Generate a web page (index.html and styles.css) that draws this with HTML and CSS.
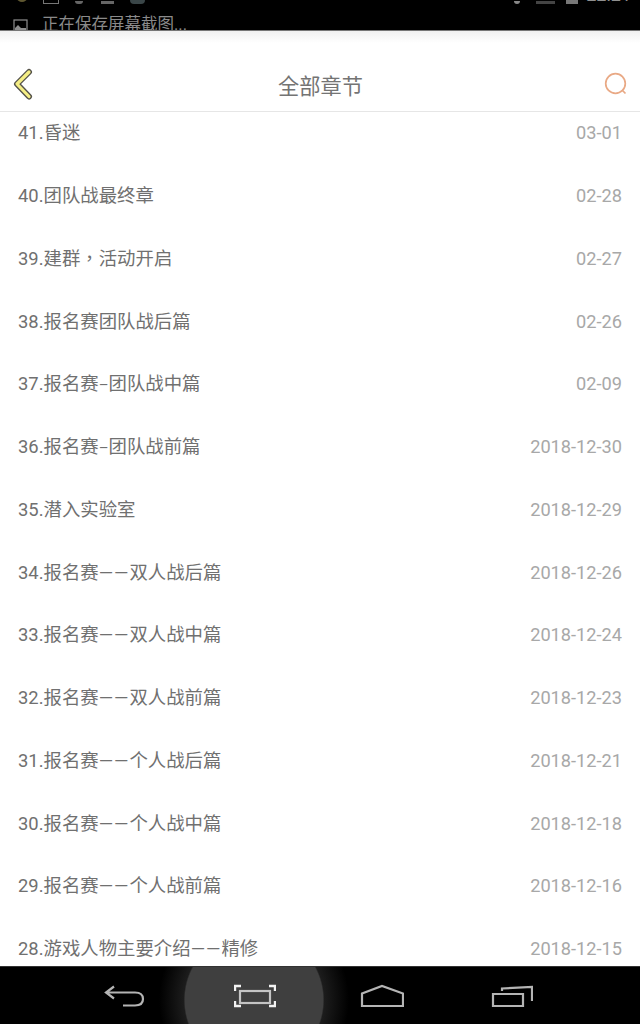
FILE: index.html
```html
<!DOCTYPE html>
<html lang="zh-CN">

<head>
    <meta charset="UTF-8">
    <meta name="viewport" content="width=device-width, initial-scale=1.0">
    <title>全部章节</title>
    <link rel="stylesheet" href="styles.css">
</head>

<body>
    <div class="status-bar">
        <div class="status-icons">
            <span class="status-left">
                <i class="dot"></i>
                <i class="square"></i>
                <i class="pin"></i>
                <i class="block"></i>
                <i class="blob"></i>
            </span>
            <span class="status-right">
                <i class="wifi"></i>
                <i class="signal"></i>
                <i class="battery"></i>
                <span class="clock">22:21</span>
            </span>
        </div>
        <div class="notice">
            <svg class="notice-icon" width="15" height="15" viewBox="0 0 15 15">
                <rect x="1" y="1" width="13" height="13" fill="none" stroke="#8f8f8f" stroke-width="1.2"/>
                <path d="M2 13 L2 9 L5 6 L8 9 L13 9 L13 13 Z" fill="#8f8f8f"/>
            </svg>
            <span class="notice-text">正在保存屏幕截图...</span>
        </div>
    </div>

    <div class="app">
        <header class="top-bar">
            <svg class="back-icon" width="20" height="32" viewBox="0 0 20 32">
                <path d="M16 4 L4 16 L16 28.5" fill="none" stroke="#55534a" stroke-width="6" stroke-linecap="round" stroke-linejoin="round"/>
                <path d="M16 4 L4 16 L16 28.5" fill="none" stroke="#f5ee85" stroke-width="3.2" stroke-linecap="round" stroke-linejoin="round"/>
            </svg>
            <h1>全部章节</h1>
            <svg class="chat-icon" width="24" height="24" viewBox="0 0 24 24">
                <circle cx="11.5" cy="11.5" r="9.8" fill="none" stroke="#e9a985" stroke-width="1.7"/>
                <path d="M18 18 L21.5 21.5" fill="none" stroke="#e9a985" stroke-width="1.7"/>
            </svg>
        </header>

        <ul class="chapter-list">
            <li class="chapter"><span class="name">41.昏迷</span><span class="date">03-01</span></li>
            <li class="chapter"><span class="name">40.团队战最终章</span><span class="date">02-28</span></li>
            <li class="chapter"><span class="name">39.建群<span class="comma" lang="zh-TW">，</span>活动开启</span><span class="date">02-27</span></li>
            <li class="chapter"><span class="name">38.报名赛团队战后篇</span><span class="date">02-26</span></li>
            <li class="chapter"><span class="name">37.报名赛<span class="dash-short">–</span>团队战中篇</span><span class="date">02-09</span></li>
            <li class="chapter"><span class="name">36.报名赛<span class="dash-short">–</span>团队战前篇</span><span class="date">2018-12-30</span></li>
            <li class="chapter"><span class="name">35.潜入实验室</span><span class="date">2018-12-29</span></li>
            <li class="chapter"><span class="name">34.报名赛<span class="dash">——</span>双人战后篇</span><span class="date">2018-12-26</span></li>
            <li class="chapter"><span class="name">33.报名赛<span class="dash">——</span>双人战中篇</span><span class="date">2018-12-24</span></li>
            <li class="chapter"><span class="name">32.报名赛<span class="dash">——</span>双人战前篇</span><span class="date">2018-12-23</span></li>
            <li class="chapter"><span class="name">31.报名赛<span class="dash">——</span>个人战后篇</span><span class="date">2018-12-21</span></li>
            <li class="chapter"><span class="name">30.报名赛<span class="dash">——</span>个人战中篇</span><span class="date">2018-12-18</span></li>
            <li class="chapter"><span class="name">29.报名赛<span class="dash">——</span>个人战前篇</span><span class="date">2018-12-16</span></li>
            <li class="chapter"><span class="name">28.游戏人物主要介绍<span class="dash">——</span>精修</span><span class="date">2018-12-15</span></li>
        </ul>
    </div>

    <nav class="nav-bar">
        <div class="press-glow"></div>
        <svg class="nav-icon nav-back" width="42" height="24" viewBox="0 0 42 24">
            <path d="M11 2.5 L3 8.5 L11 14.5 M3 8.5 L32 8.5 Q40 8.5 40 15 Q40 21.5 32 21.5 L20 21.5" fill="none" stroke="#b4b4b4" stroke-width="2.2"/>
        </svg>
        <svg class="nav-icon nav-shot" width="42" height="24" viewBox="0 0 42 24">
            <rect x="6" y="7" width="30" height="12" fill="none" stroke="#c4c4c4" stroke-width="2.2"/>
            <path d="M1 7 L1 2 L7 2 M35 2 L41 2 L41 7 M1 17 L1 22 L7 22 M35 22 L41 22 L41 17" fill="none" stroke="#f2f2f2" stroke-width="2.4"/>
        </svg>
        <svg class="nav-icon nav-home" width="44" height="24" viewBox="0 0 44 24">
            <path d="M2 22 L2 9.5 L22 2 L43 9.5 L43 22 Z" fill="none" stroke="#b4b4b4" stroke-width="2.2"/>
        </svg>
        <svg class="nav-icon nav-recent" width="42" height="24" viewBox="0 0 42 24">
            <path d="M2 10 L32 10 L32 22 L2 22 Z" fill="none" stroke="#b4b4b4" stroke-width="2.2"/>
            <path d="M11 7 L11 4.5 L41 3 L41 17" fill="none" stroke="#b4b4b4" stroke-width="2.2"/>
        </svg>
    </nav>
</body>

</html>
```

FILE: styles.css
```css
* {
    box-sizing: border-box;
}

html,
body {
    margin: 0;
    padding: 0;
    height: 1024px;
    overflow: hidden;
}

body {
    display: flex;
    flex-direction: column;
    background: #fff;
    font-family: Roboto, "Noto Sans CJK SC", sans-serif;
}

/* status bar, cut off by the screenshot preview */
.status-bar {
    flex: none;
    height: 31px;
    background: #000;
    overflow: hidden;
    border-bottom: 1px solid #777;
    color: #8a8a8a;
}

.status-icons {
    display: flex;
    justify-content: space-between;
    height: 5px;
    padding: 0 9px 0 17px;
}

.status-left,
.status-right {
    display: flex;
    align-items: flex-end;
    height: 4px;
}

.status-left i,
.status-right i {
    display: block;
    background: #666;
}

.dot {
    width: 10px;
    height: 8px;
    border-radius: 50%;
    margin-right: 16px;
    margin-bottom: 2px;
    background: #5f5730 !important;
}

.square {
    width: 16px;
    height: 12px;
    margin-right: 16px;
    background: none !important;
    border: 1px solid #777;
}

.pin {
    width: 8px;
    height: 3px;
    margin-right: 18px;
    border-radius: 0 0 4px 4px;
}

.block {
    width: 13px;
    height: 3px;
    margin-right: 16px;
}

.blob {
    width: 15px;
    height: 4px;
    border-radius: 0 0 8px 8px;
    background: #3a4648 !important;
}

.wifi {
    width: 6px;
    height: 3px;
    margin-right: 16px;
    border-radius: 0 0 3px 3px;
    background: #888 !important;
}

.signal {
    width: 19px;
    height: 3px;
    margin-right: 11px;
    background: #444 !important;
}

.battery {
    width: 12px;
    height: 4px;
    margin-right: 8px;
    background: #777 !important;
}

.clock {
    font-size: 18px;
    line-height: 18px;
    margin-top: -14px;
    align-self: flex-start;
    color: #8f8f8f;
}

.notice {
    display: flex;
    align-items: center;
    gap: 14px;
    height: 20px;
    margin-top: 9px;
    padding-left: 13px;
}

.notice-icon {
    flex: none;
    margin-top: 5px;
}

.notice-text {
    font-size: 16.5px;
    line-height: 20px;
    margin-top: 2px;
}

.app {
    flex: 1;
    min-height: 0;
    display: flex;
    flex-direction: column;
    overflow: hidden;
}

.top-bar {
    flex: none;
    position: relative;
    z-index: 1;
    display: flex;
    align-items: center;
    justify-content: space-between;
    height: 81px;
    padding: 28px 12px 0 13px;
    background: linear-gradient(#f1f1f1, #fff 12px);
    border-bottom: 1px solid #e6e6e6;
}

.top-bar h1 {
    margin: -1px 0 0 4px;
    font-size: 21.2px;
    font-weight: 400;
    color: #747474;
}

.back-icon {
    margin-top: -2px;
}

.chat-icon {
    margin-top: -2px;
}

.chapter-list {
    list-style: none;
    margin: -12px 0 0;
    padding: 0 18px;
}

.chapter {
    display: flex;
    align-items: center;
    justify-content: space-between;
    height: 62.75px;
}

.name {
    font-size: 18.4px;
    color: #707070;
}

.date {
    margin-top: 3px;
    font-size: 18.2px;
    color: #a8a8a8;
}

/* centred comma as the phone font draws it */
.comma {
    font-family: "Noto Sans CJK TC", sans-serif;
}

.dash {
    letter-spacing: 1px;
}

.dash-short {
    font-size: 15px;
}

.nav-bar {
    flex: none;
    position: relative;
    display: flex;
    align-items: center;
    height: 58px;
    background: #000;
    overflow: hidden;
    border-top: 1px solid #333;
}

.press-glow {
    position: absolute;
    left: 159px;
    top: -62px;
    width: 190px;
    height: 190px;
    border-radius: 50%;
    background: radial-gradient(circle closest-side, #3f3f3f 0, #3f3f3f 72.5%, #1c1c1c 74%, #000 100%);
}

.nav-icon {
    position: absolute;
    top: 17px;
}

.nav-back {
    left: 103px;
}

.nav-shot {
    left: 234px;
}

.nav-home {
    left: 360px;
}

.nav-recent {
    left: 491px;
}
```
